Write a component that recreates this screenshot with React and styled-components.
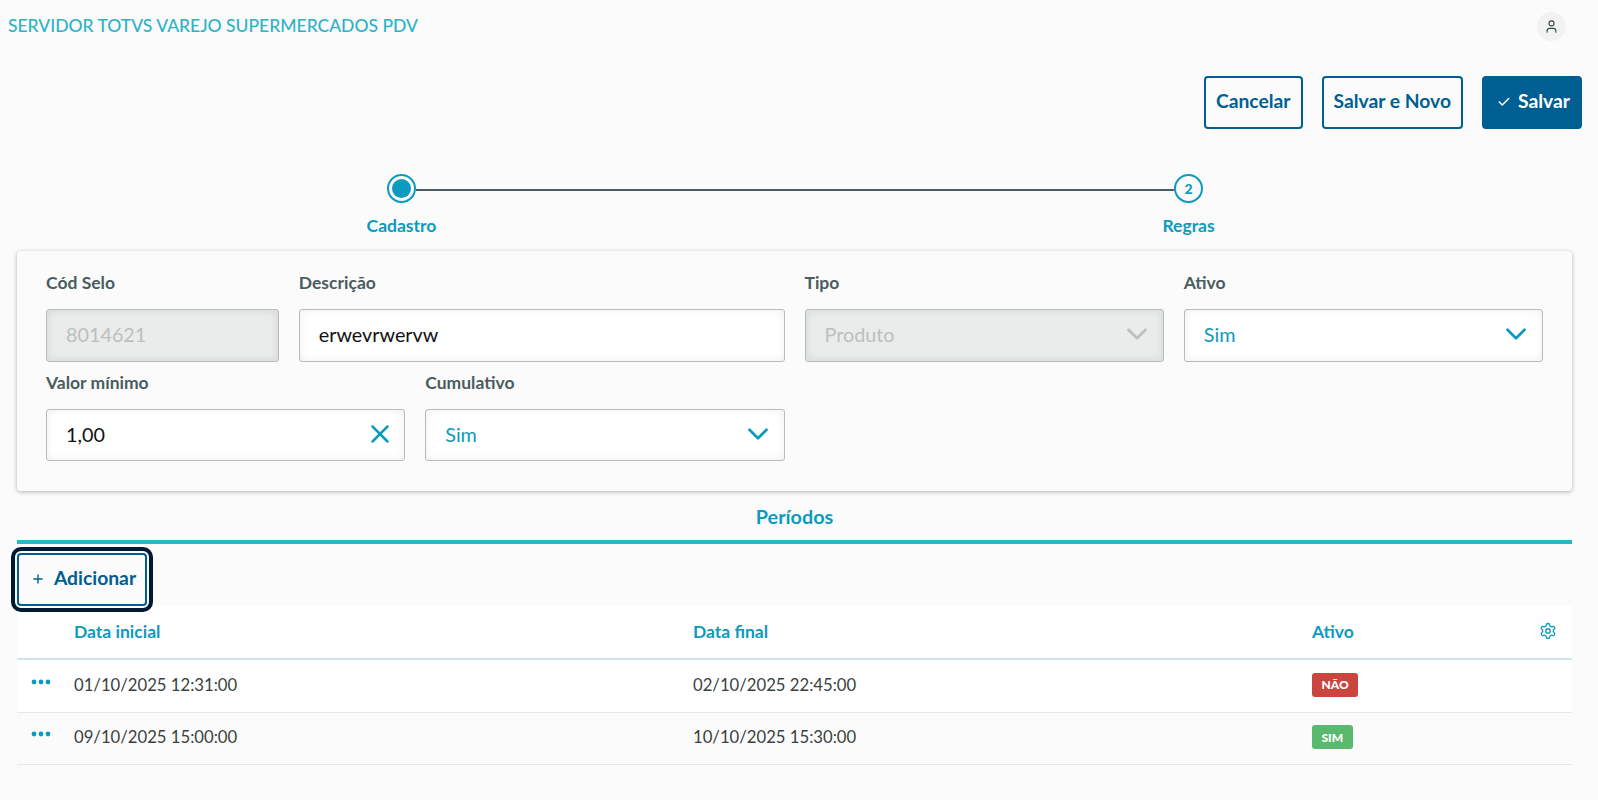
import React from "react";
import styled, { createGlobalStyle } from "styled-components";
import { Check, ChevronDown, Plus, Settings, User, X } from "lucide-react";

const GlobalStyle = createGlobalStyle`
  body {
    margin: 0;
    background: #fbfbfb;
    font-family: "Lato", "Open Sans", sans-serif;
  }
`;

const TopBar = styled.header`
  height: 52px;
  display: flex;
  align-items: center;
  justify-content: space-between;
  padding: 0 32px 0 8px;
`;

const Title = styled.h1`
  margin: 0 0 2px;
  font-size: 17.5px;
  font-weight: 500;
  color: #2cb3c8;
`;

const Avatar = styled.div`
  width: 29px;
  height: 29px;
  border-radius: 50%;
  background: #f2f2f2;
  color: #3a4a50;
  display: flex;
  align-items: center;
  justify-content: center;
`;

const Actions = styled.div`
  display: flex;
  justify-content: flex-end;
  gap: 19px;
  margin-top: 24px;
  padding-right: 16px;
`;

const Button = styled.button`
  height: 53px;
  padding: 0 10px 4px;
  display: inline-flex;
  align-items: center;
  gap: 7px;
  box-sizing: border-box;
  border: 2px solid #005f92;
  border-radius: 4px;
  background: ${(p) => (p.$primary ? "#005f92" : "transparent")};
  color: ${(p) => (p.$primary ? "#fff" : "#005f92")};
  font-family: inherit;
  font-size: 19.3px;
  font-weight: 700;
`;

const ButtonIcon = styled.span`
  display: flex;
  margin: 3px 0 0 3px;
`;

const Stepper = styled.div`
  display: flex;
  margin-top: 45px;
  padding: 0 395px 0 387px;
`;

const Step = styled.div`
  width: 29px;
  display: flex;
  flex-direction: column;
  align-items: center;
`;

const StepCircle = styled.div`
  width: 29px;
  height: 29px;
  box-sizing: border-box;
  flex: none;
  border-radius: 50%;
  border: 2px solid #0c9abe;
  display: flex;
  align-items: center;
  justify-content: center;
  color: #0c9abe;
  font-size: 14px;
  font-weight: 900;
`;

const StepDot = styled.div`
  width: 19px;
  height: 19px;
  border-radius: 50%;
  background: #0c9abe;
`;

const StepLabel = styled.div`
  margin-top: 12px;
  line-height: 22px;
  white-space: nowrap;
  color: #0c9abe;
  font-size: 17.5px;
  font-weight: 700;
`;

const StepLine = styled.div`
  flex: 1;
  height: 2px;
  margin-top: 15px;
  background: #4a5c60;
`;

const Card = styled.section`
  margin: 14px 26px 0 17px;
  height: 240px;
  box-sizing: border-box;
  padding: 21px 29px 0;
  border-radius: 4px;
  background: #fbfbfb;
  box-shadow: 0 1px 4px rgba(0, 0, 0, 0.3);
  display: grid;
  grid-template-columns: repeat(12, 1fr);
  grid-auto-rows: 99.5px;
  column-gap: 20px;
`;

const Field = styled.div`
  grid-column: span ${(p) => p.$span};
`;

const Label = styled.label`
  display: block;
  height: 37px;
  line-height: 22px;
  color: #4a5c60;
  font-size: 17.5px;
  font-weight: 700;
`;

const Control = styled.div`
  height: 52.5px;
  box-sizing: border-box;
  display: flex;
  align-items: center;
  justify-content: space-between;
  padding: 0 9px 2px 19px;
  border: 1px solid #b4bcbc;
  border-radius: 3px;
  background: ${(p) => (p.$disabled ? "#eaecec" : "#fff")};
  box-shadow: inset 0 0 8px rgba(0, 0, 0, ${(p) => (p.$disabled ? "0.1" : "0.07")});
  color: ${(p) => (p.$disabled ? "#b8c0c0" : p.$accent ? "#0c9abe" : "#111")};
  font-size: 19.8px;
`;

const ControlInput = styled.input`
  flex: 1;
  min-width: 0;
  padding: 0;
  border: 0;
  outline: 0;
  background: transparent;
  color: inherit;
  font-family: inherit;
  font-size: inherit;
`;

const SectionTitle = styled.div`
  margin: 14px 26px 0 17px;
  line-height: 22px;
  text-align: center;
  color: #0c9abe;
  font-size: 19.8px;
  font-weight: 700;
`;

const Divider = styled.div`
  margin: 13px 26px 0 17px;
  height: 4px;
  background: #29b6c5;
`;

const TableActions = styled.div`
  margin: 9px 0 0 17px;
  position: relative;
  z-index: 1;
`;

const AddButton = styled(Button)`
  width: 130px;
  justify-content: center;
  gap: 9px;
  outline: 4px solid #001a33;
  outline-offset: 2px;
`;

const Table = styled.table`
  width: calc(100% - 43px);
  margin-left: 17px;
  border-collapse: collapse;
  table-layout: fixed;
`;

const HeadCell = styled.th`
  height: 50px;
  padding: 0 0 2px;
  background: #fff;
  border-bottom: 2px solid #c9e8f0;
  text-align: left;
  color: #0c9abe;
  font-size: 17.5px;
  font-weight: 700;
`;

const Cell = styled.td`
  height: 49.5px;
  padding: 0 0 2px;
  background: ${(p) => (p.$odd ? "#fff" : "transparent")};
  border-bottom: 1px solid #e6e6e6;
  color: #3a3f40;
  font-size: 16.7px;
`;

const RowMenu = styled.svg`
  display: block;
  width: 20px;
  height: 6px;
  margin: 0 0 6px 14px;
  fill: #0c9abe;
`;

const Badge = styled.span`
  display: inline-flex;
  align-items: center;
  height: 24px;
  padding: 0 9.5px;
  border-radius: 3px;
  background: ${(p) => p.$color};
  color: #fff;
  font-size: 12px;
  font-weight: 900;
`;

const GearCell = styled.span`
  display: flex;
  justify-content: flex-end;
  padding-right: 15px;
`;

const rows = [
  { start: "01/10/2025 12:31:00", end: "02/10/2025 22:45:00", active: "NÃO", color: "#c9463f" },
  { start: "09/10/2025 15:00:00", end: "10/10/2025 15:30:00", active: "SIM", color: "#5ab96e" },
];

function App() {
  return (
    <>
      <GlobalStyle />
      <TopBar>
        <Title>SERVIDOR TOTVS VAREJO SUPERMERCADOS PDV</Title>
        <Avatar>
          <User size={15} strokeWidth={1.8} />
        </Avatar>
      </TopBar>

      <Actions>
        <Button>Cancelar</Button>
        <Button>Salvar e Novo</Button>
        <Button $primary>
          <ButtonIcon>
            <Check size={14} strokeWidth={2.6} />
          </ButtonIcon>
          Salvar
        </Button>
      </Actions>

      <Stepper>
        <Step>
          <StepCircle>
            <StepDot />
          </StepCircle>
          <StepLabel>Cadastro</StepLabel>
        </Step>
        <StepLine />
        <Step>
          <StepCircle>2</StepCircle>
          <StepLabel>Regras</StepLabel>
        </Step>
      </Stepper>

      <Card>
        <Field $span={2}>
          <Label>Cód Selo</Label>
          <Control $disabled>
            <ControlInput readOnly value="8014621" />
          </Control>
        </Field>
        <Field $span={4}>
          <Label>Descrição</Label>
          <Control>
            <ControlInput readOnly value="erwevrwervw" />
          </Control>
        </Field>
        <Field $span={3}>
          <Label>Tipo</Label>
          <Control $disabled>
            Produto
            <ChevronDown size={34} strokeWidth={1.9} color="#b8c0c0" />
          </Control>
        </Field>
        <Field $span={3}>
          <Label>Ativo</Label>
          <Control $accent>
            Sim
            <ChevronDown size={34} strokeWidth={1.9} color="#0c9abe" />
          </Control>
        </Field>
        <Field $span={3}>
          <Label>Valor mínimo</Label>
          <Control>
            <ControlInput readOnly value="1,00" />
            <X size={30} strokeWidth={2} color="#0c9abe" />
          </Control>
        </Field>
        <Field $span={3}>
          <Label>Cumulativo</Label>
          <Control $accent>
            Sim
            <ChevronDown size={34} strokeWidth={1.9} color="#0c9abe" />
          </Control>
        </Field>
      </Card>

      <SectionTitle>Períodos</SectionTitle>
      <Divider />

      <TableActions>
        <AddButton>
          <ButtonIcon>
            <Plus size={14} strokeWidth={2.4} />
          </ButtonIcon>
          Adicionar
        </AddButton>
      </TableActions>

      <Table>
        <colgroup>
          <col width="57" />
          <col width="619" />
          <col width="619" />
          <col />
          <col width="60" />
        </colgroup>
        <thead>
          <tr>
            <HeadCell />
            <HeadCell>Data inicial</HeadCell>
            <HeadCell>Data final</HeadCell>
            <HeadCell>Ativo</HeadCell>
            <HeadCell>
              <GearCell>
                <Settings size={18} strokeWidth={1.8} />
              </GearCell>
            </HeadCell>
          </tr>
        </thead>
        <tbody>
          {rows.map((row, i) => (
            <tr key={row.start}>
              <Cell $odd={i === 0}>
                <RowMenu viewBox="0 0 20 6">
                  <circle cx="3" cy="3" r="2.4" />
                  <circle cx="10" cy="3" r="2.4" />
                  <circle cx="17" cy="3" r="2.4" />
                </RowMenu>
              </Cell>
              <Cell $odd={i === 0}>{row.start}</Cell>
              <Cell $odd={i === 0}>{row.end}</Cell>
              <Cell $odd={i === 0}>
                <Badge $color={row.color}>{row.active}</Badge>
              </Cell>
              <Cell $odd={i === 0} />
            </tr>
          ))}
        </tbody>
      </Table>
    </>
  );
}

export default App;
